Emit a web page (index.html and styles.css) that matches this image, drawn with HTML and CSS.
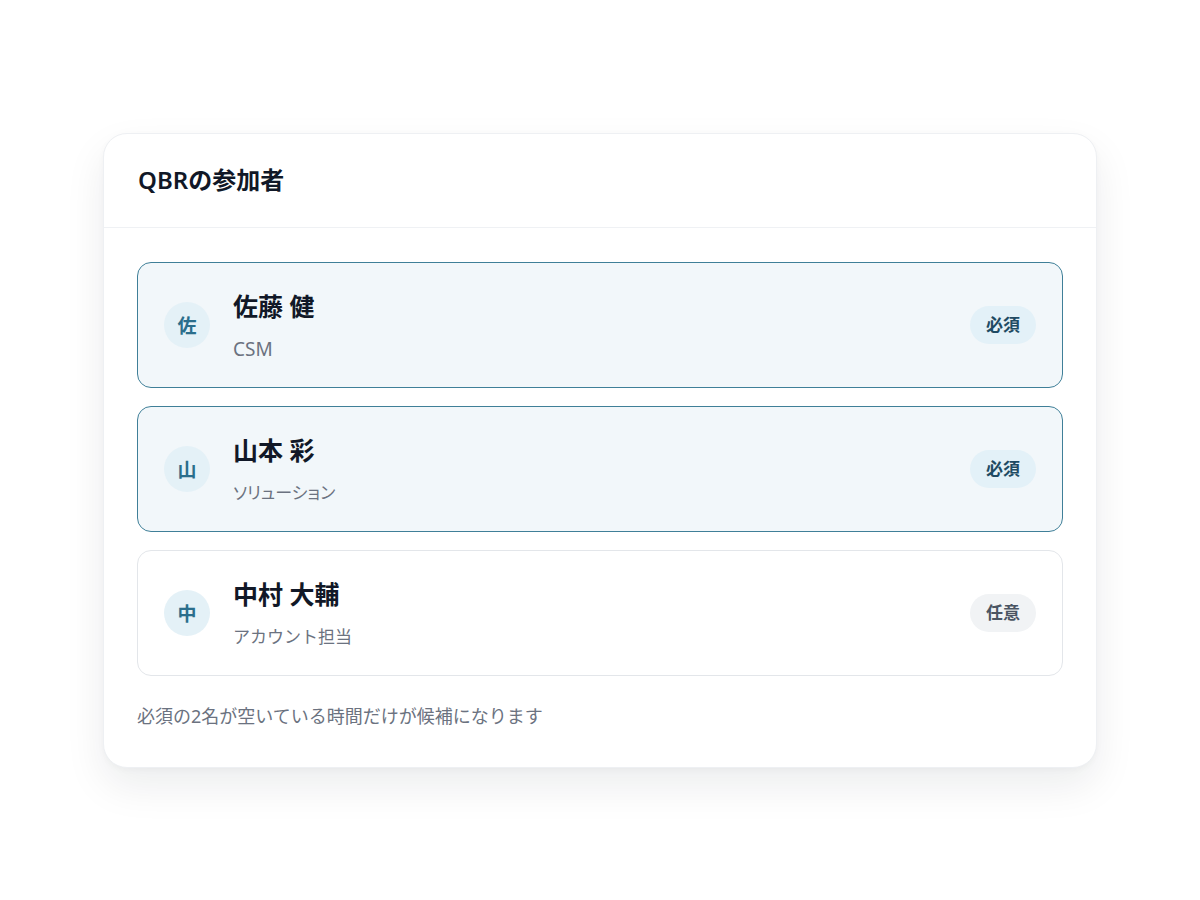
FILE: index.html
```html
<!DOCTYPE html>
<html lang="ja">
<head>
<meta charset="utf-8">
<title>QBRの参加者</title>
<link rel="stylesheet" href="styles.css">
</head>
<body>
<div class="card">
  <div class="card-header">
    <h1 class="title">QBRの参加者</h1>
  </div>
  <div class="card-body">
    <div class="list">
      <div class="row row-required">
        <div class="avatar">佐</div>
        <div class="info">
          <div class="name">佐藤 健</div>
          <div class="role role-latin">CSM</div>
        </div>
        <span class="badge badge-required">必須</span>
      </div>
      <div class="row row-required">
        <div class="avatar">山</div>
        <div class="info">
          <div class="name">山本 彩</div>
          <div class="role role-palt">ソリューション</div>
        </div>
        <span class="badge badge-required">必須</span>
      </div>
      <div class="row">
        <div class="avatar">中</div>
        <div class="info">
          <div class="name">中村 大輔</div>
          <div class="role">アカウント担当</div>
        </div>
        <span class="badge badge-optional">任意</span>
      </div>
    </div>
    <p class="note">必須の2名が空いている時間だけが候補になります</p>
  </div>
</div>
</body>
</html>
```

FILE: styles.css
```css
* { box-sizing: border-box; }
html, body { margin: 0; padding: 0; }
body {
  min-height: 100vh;
  background: #ffffff;
  display: flex;
  align-items: center;
  justify-content: center;
  font-family: "Noto Sans", "Noto Sans CJK JP", sans-serif;
  color: #0f172a;
}
.card {
  width: 994px;
  background: #ffffff;
  border: 1px solid #eef0f3;
  border-radius: 24px;
  box-shadow: 0 18px 40px rgba(15, 23, 42, 0.08), 0 2px 6px rgba(15, 23, 42, 0.03);
}
.card-header {
  padding: 29px 34px 31px;
  border-bottom: 1px solid #eff1f4;
}
.title {
  margin: 0;
  font-size: 24px;
  line-height: 33px;
  font-weight: 600;
  color: #111827;
}
.card-body {
  padding: 34px 33px 37px;
}
.list {
  display: flex;
  flex-direction: column;
  gap: 18px;
}
.row {
  display: flex;
  align-items: center;
  padding: 26px;
  border: 1px solid #e3e6ea;
  border-radius: 14px;
  background: #ffffff;
}
.row-required {
  background: #f2f7fa;
  border-color: #3f7f98;
}
.avatar {
  width: 46px;
  height: 46px;
  border-radius: 50%;
  background: #e4f1f7;
  color: #2b6e8c;
  font-size: 19px;
  font-weight: 600;
  display: flex;
  align-items: center;
  justify-content: center;
  flex-shrink: 0;
}
.info {
  flex: 1;
  margin-left: 23px;
  display: flex;
  flex-direction: column;
  gap: 14px;
}
.name {
  font-size: 25px;
  line-height: 34px;
  font-weight: 600;
  color: #111827;
}
.role {
  font-size: 17px;
  line-height: 24px;
  color: #6b7280;
}
.role-latin {
  font-size: 19px;
}
.role-palt {
  font-feature-settings: "palt";
}
.badge {
  font-size: 17px;
  font-weight: 600;
  line-height: 38px;
  height: 38px;
  padding: 0 16px;
  border-radius: 19px;
}
.badge-required {
  background: #e3f1f8;
  color: #1f4b63;
}
.badge-optional {
  background: #f1f3f5;
  color: #4b5563;
}
.note {
  margin: 27px 0 0;
  font-size: 18px;
  line-height: 27px;
  color: #6b7280;
}
```
